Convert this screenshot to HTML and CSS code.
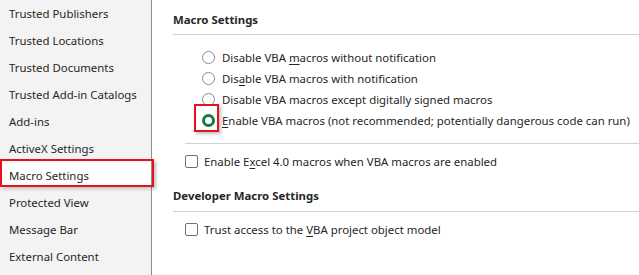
FILE: index.html
```html
<!DOCTYPE html>
<html>
<head>
<meta charset="utf-8">
<link rel="stylesheet" href="styles.css">
</head>
<body>
<div class="window">
  <nav class="sidebar">
    <div class="nav-item">Trusted Publishers</div>
    <div class="nav-item">Trusted Locations</div>
    <div class="nav-item">Trusted Documents</div>
    <div class="nav-item">Trusted Add-in Catalogs</div>
    <div class="nav-item">Add-ins</div>
    <div class="nav-item">ActiveX Settings</div>
    <div class="nav-item selected">Macro Settings<span class="callout nav-callout"></span></div>
    <div class="nav-item">Protected View</div>
    <div class="nav-item">Message Bar</div>
    <div class="nav-item">External Content</div>
  </nav>
  <main class="content">
    <div class="section-title first">Macro Settings</div>
    <div class="radio-list">
      <div class="option"><span class="radio"></span><span>Disable VBA <u>m</u>acros without notification</span></div>
      <div class="option"><span class="radio"></span><span>Dis<u>a</u>ble VBA macros with notification</span></div>
      <div class="option"><span class="radio"></span><span>Disable VBA macros except digitally signed macros</span></div>
      <div class="option"><span class="radio checked"><span class="callout radio-callout"></span></span><span><u>E</u>nable VBA macros (not recommended; potentially dangerous code can run)</span></div>
    </div>
    <div class="divider"></div>
    <div class="option check-row"><span class="checkbox"></span><span>Enable E<u>x</u>cel 4.0 macros when VBA macros are enabled</span></div>
    <div class="section-title second">Developer Macro Settings</div>
    <div class="option check-row trust"><span class="checkbox"></span><span>Trust access to the <u>V</u>BA project object model</span></div>
  </main>
</div>
</body>
</html>
```
FILE: styles.css
```css
html, body {
  margin: 0;
  padding: 0;
  background: #ffffff;
}
body {
  font-family: "Noto Sans", "Segoe UI", sans-serif;
  font-size: 11.4px;
  color: #262626;
  overflow: hidden;
}
.window {
  display: flex;
  width: 639px;
  height: 275px;
}
.sidebar {
  width: 151px;
  flex: none;
  background: #f3f3f3;
  border-right: 1px solid #8f8f8f;
  display: flex;
  flex-direction: column;
}
.nav-item {
  position: relative;
  height: 27px;
  line-height: 27px;
  padding-left: 9px;
  white-space: nowrap;
}
.nav-item.selected {
  background: #ffffff;
}
.callout {
  position: absolute;
  border: 2px solid #e8101a;
  box-shadow: 2px 2px 3px rgba(0, 0, 0, 0.25);
}
.nav-callout {
  left: 0;
  top: -3px;
  width: 150px;
  height: 24px;
}
.content {
  flex: 1;
  padding-left: 21px;
  display: flex;
  flex-direction: column;
}
.section-title {
  font-weight: bold;
  line-height: 16px;
  border-bottom: 1px solid #d2d2d2;
  padding-bottom: 6px;
}
.section-title.first {
  padding-top: 12px;
}
.section-title.second {
  margin-top: 16px;
  padding-bottom: 7px;
}
.radio-list {
  margin-top: 12px;
  padding-left: 29px;
  display: flex;
  flex-direction: column;
}
.option {
  display: flex;
  align-items: center;
  height: 21px;
  white-space: nowrap;
}
.radio {
  position: relative;
  width: 13px;
  height: 13px;
  box-sizing: border-box;
  border: 1px solid #8a8a8a;
  border-radius: 50%;
  margin-right: 7px;
  flex: none;
}
.radio.checked {
  border: 3px solid #107c41;
}
.radio-callout {
  left: -11px;
  top: -13px;
  width: 21px;
  height: 24px;
}
.divider {
  margin-top: 12px;
  margin-left: 12px;
  border-top: 1px solid #d2d2d2;
}
.check-row {
  margin-top: 7px;
  padding-left: 12px;
}
.check-row.trust {
  margin-top: 7px;
}
.checkbox {
  width: 13px;
  height: 13px;
  box-sizing: border-box;
  border: 1px solid #707070;
  border-radius: 2px;
  margin-right: 6px;
  flex: none;
}
u {
  text-decoration-thickness: 1px;
  text-underline-offset: 2px;
}
```
